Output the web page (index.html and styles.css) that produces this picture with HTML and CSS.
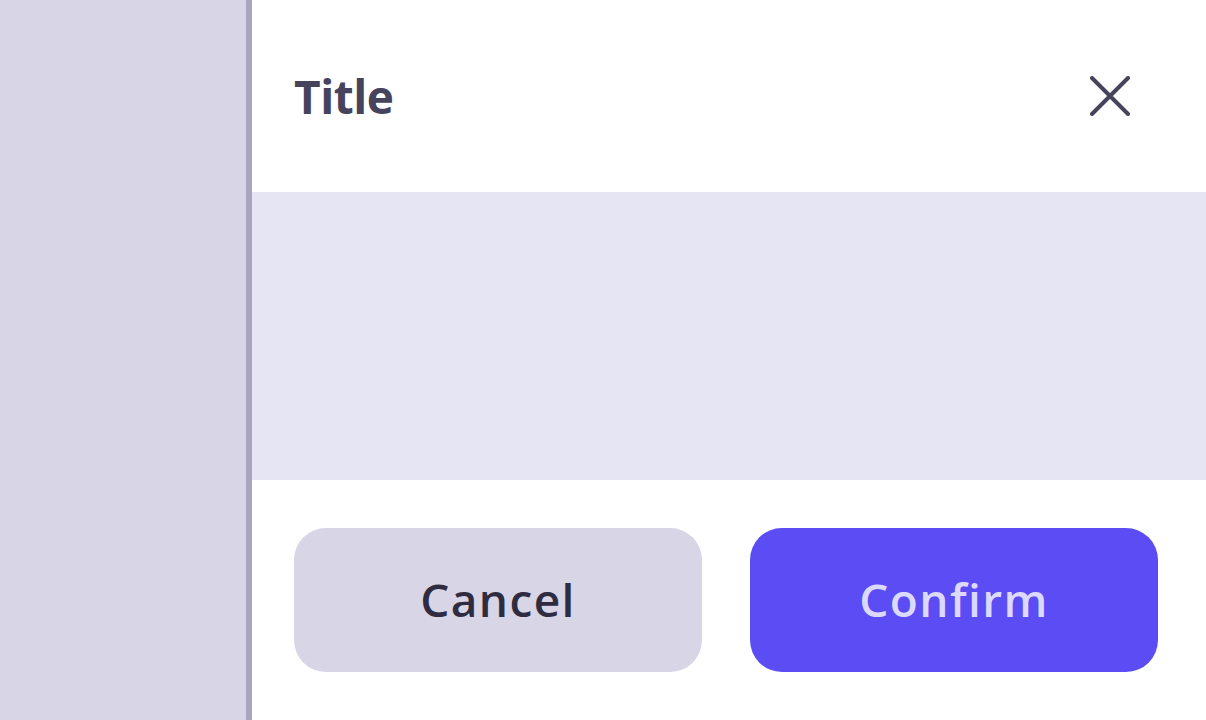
FILE: index.html
```html
<!DOCTYPE html>
<html>
<head>
<meta charset="utf-8">
<link rel="stylesheet" href="styles.css">
</head>
<body>
<div class="app">
  <aside class="side"></aside>
  <section class="modal">
    <header class="modal-head">
      <h1 class="title">Title</h1>
      <button class="close" aria-label="Close">
        <svg width="40" height="40" viewBox="0 0 40 40"><path d="M2 2 L38 38 M38 2 L2 38" stroke="#46435c" stroke-width="4" stroke-linecap="round" fill="none"/></svg>
      </button>
    </header>
    <div class="modal-body"></div>
    <footer class="modal-foot">
      <button class="btn btn-cancel">Cancel</button>
      <button class="btn btn-confirm">Confirm</button>
    </footer>
  </section>
</div>
</body>
</html>
```
FILE: styles.css
```css
html, body { margin: 0; padding: 0; }
body { font-family: "Open Sans", "Liberation Sans", sans-serif; background: #fff; }
.app { display: flex; width: 1206px; height: 720px; overflow: hidden; }
.side { width: 246px; flex: none; background: #d8d5e6; border-right: 6px solid #a9a5c1; }
.modal { flex: 1; display: flex; flex-direction: column; background: #fff; }
.modal-head { height: 192px; display: flex; align-items: center; justify-content: space-between; padding: 0 76px 0 42px; box-sizing: border-box; }
.title { margin: 0; font-size: 46px; font-weight: 700; color: #46435c; letter-spacing: -0.5px; }
.close { border: 0; background: none; padding: 0; width: 40px; height: 40px; display: flex; }
.modal-body { height: 288px; background: #e6e5f4; }
.modal-foot { flex: 1; display: flex; gap: 48px; padding: 48px 48px 48px 42px; }
.btn { flex: 1; border: 0; border-radius: 32px; font-family: inherit; font-size: 46px; font-weight: 560; letter-spacing: 1.4px; padding: 0 0 2px; }
.btn-cancel { background: #d8d5e6; color: #2f2c41; }
.btn-confirm { background: #5b4cf4; color: #dcd9ff; }
```
